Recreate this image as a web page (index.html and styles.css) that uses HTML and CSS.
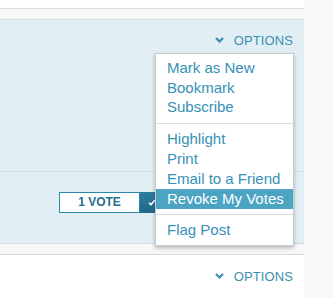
FILE: index.html
```html
<!DOCTYPE html>
<html>
<head>
<meta charset="utf-8">
<link rel="stylesheet" href="styles.css">
</head>
<body>
<div class="column">
  <div class="post post-prev"></div>
  <div class="gap"></div>
  <div class="post post-active">
    <div class="post-head">
      <a class="options">
        <svg class="chev" width="9" height="6" viewBox="0 0 9 6"><polyline points="1,1 4.5,4.5 8,1" fill="none" stroke="#3b8fb0" stroke-width="2.2"/></svg>
        OPTIONS
      </a>
    </div>
    <div class="post-body"></div>
    <div class="post-foot">
      <div class="vote">
        <span class="vote-count">1 VOTE</span>
        <span class="vote-check">
          <svg width="8" height="7" viewBox="0 0 8 7"><polyline points="1,3.8 3,5.6 7,1" fill="none" stroke="#fff" stroke-width="1.6"/></svg>
        </span>
      </div>
    </div>
    <div class="menu">
      <ul class="group group-first">
        <li>Mark as New</li>
        <li>Bookmark</li>
        <li>Subscribe</li>
      </ul>
      <ul class="group group-mid">
        <li>Highlight</li>
        <li>Print</li>
        <li>Email to a Friend</li>
        <li class="active">Revoke My Votes</li>
      </ul>
      <ul class="group group-last">
        <li>Flag Post</li>
      </ul>
    </div>
  </div>
  <div class="gap"></div>
  <div class="post post-next">
    <div class="post-head">
      <a class="options">
        <svg class="chev" width="9" height="6" viewBox="0 0 9 6"><polyline points="1,1 4.5,4.5 8,1" fill="none" stroke="#3b8fb0" stroke-width="2.2"/></svg>
        OPTIONS
      </a>
    </div>
  </div>
</div>
</body>
</html>
```

FILE: styles.css
```css
html, body {
  margin: 0;
  padding: 0;
}
body {
  background: #f8f8f8;
  font-family: "Liberation Sans", Arial, sans-serif;
  height: 298px;
  overflow: hidden;
}
.column {
  width: 304px;
  background: #ffffff;
}
.post-prev {
  height: 8px;
  background: #ffffff;
  border-bottom: 1px solid #d9d9d9;
}
.gap {
  height: 10px;
  background: #f7f7f7;
}
.post-active {
  position: relative;
  background: #e1eef3;
  border-top: 1px solid #d5dadc;
  border-bottom: 1px solid #d5dadc;
}
.post-head {
  display: flex;
  justify-content: flex-end;
  padding: 13px 11px 0 0;
  height: 15px;
}
.options {
  display: flex;
  align-items: center;
  gap: 10px;
  color: #3b8fb0;
  font-size: 13px;
  line-height: 15px;
  letter-spacing: 0.1px;
}
.chev {
  display: block;
  margin-top: -1px;
}
.post-body {
  height: 123px;
}
.post-foot {
  border-top: 1px solid #d3dcdf;
  padding: 20px 0 30px 59px;
}
.vote {
  display: flex;
  height: 21px;
  width: 110px;
}
.vote-count {
  box-sizing: border-box;
  width: 81px;
  height: 21px;
  border: 1px solid #2b86a9;
  background: #ffffff;
  color: #22708f;
  font-size: 12px;
  font-weight: bold;
  line-height: 19px;
  text-align: center;
}
.vote-check {
  width: 22px;
  height: 21px;
  background: linear-gradient(#2a7d9d, #1e6a88);
  display: flex;
  align-items: center;
  justify-content: center;
}
.vote-check svg {
  display: block;
  margin-left: 2px;
}
.menu {
  position: absolute;
  left: 155px;
  top: 33px;
  width: 139px;
  box-sizing: border-box;
  background: #ffffff;
  border: 1px solid #c9c9c9;
  box-shadow: 0 2px 4px rgba(0, 0, 0, 0.25);
}
.group {
  list-style: none;
  margin: 0;
  padding: 5px 0 5px;
  border-top: 1px solid #dcdcdc;
}
.group-first {
  border-top: none;
  padding: 4px 0 6px;
}
.group-last {
  padding: 5px 0 6px;
}
.group li {
  padding-left: 11px;
  font-size: 15px;
  line-height: 19.5px;
  color: #3591b6;
  white-space: nowrap;
}
.group-mid li {
  line-height: 20px;
}
.group li.active {
  background: #4aa4c2;
  color: #ffffff;
}
.post-next {
  border-top: 1px solid #d9d9d9;
  background: #ffffff;
  height: 43px;
}
.post-next .post-head {
  padding-top: 14px;
}
```
